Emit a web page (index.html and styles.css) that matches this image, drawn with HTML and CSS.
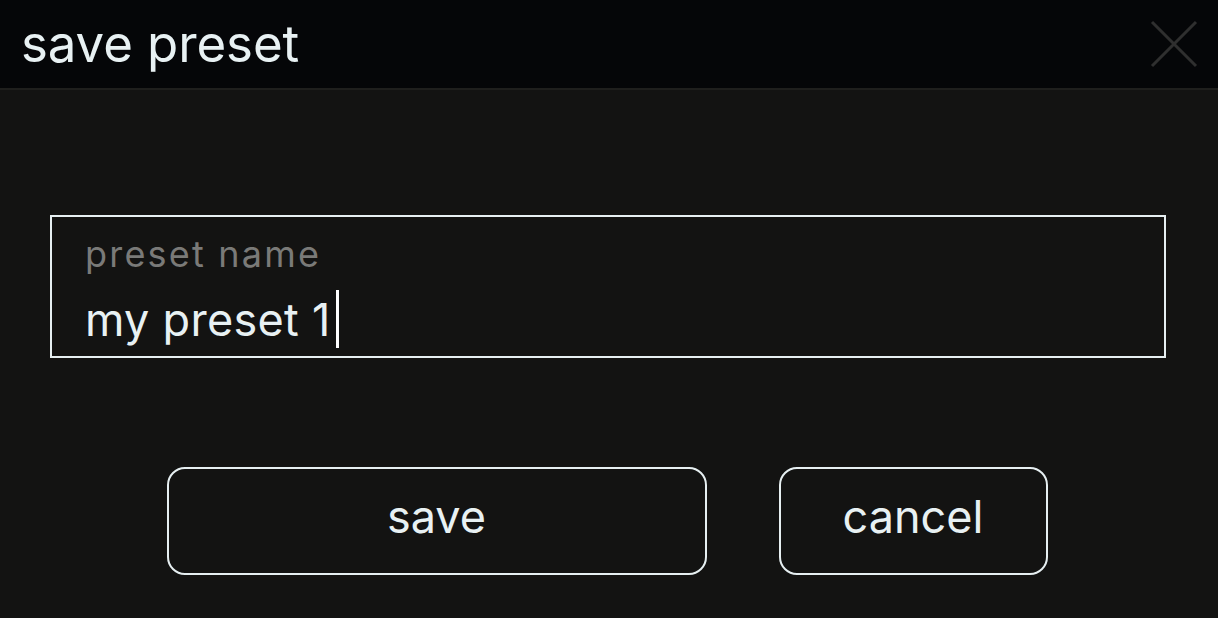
FILE: index.html
```html
<!DOCTYPE html>
<html>
<head>
<meta charset="utf-8">
<link rel="stylesheet" href="styles.css">
</head>
<body>
<div class="dialog">
  <header class="header">
    <h1 class="title">save preset</h1>
    <button class="close" aria-label="close">
      <svg width="48" height="48" viewBox="0 0 48 48"><path d="M2 2 L46 46 M46 2 L2 46" stroke="#2f2f2f" stroke-width="3" fill="none"/></svg>
    </button>
  </header>
  <main class="body">
    <div class="field">
      <div class="label">preset name</div>
      <div class="value">my preset 1<span class="caret"></span></div>
    </div>
    <div class="actions">
      <button class="btn btn-save">save</button>
      <button class="btn btn-cancel">cancel</button>
    </div>
  </main>
</div>
</body>
</html>
```
FILE: styles.css
```css
* { box-sizing: border-box; }
html, body { margin: 0; padding: 0; }
body {
  width: 1218px;
  height: 618px;
  background: #131312;
  font-family: Inter, "Liberation Sans", sans-serif;
  color: #e8f1f3;
  overflow: hidden;
}
.dialog { display: flex; flex-direction: column; height: 618px; }
.header {
  height: 90px;
  background: #050608;
  border-bottom: 2px solid #1f1f1d;
  display: flex;
  align-items: flex-start;
  justify-content: space-between;
  padding: 0 20px 0 21px;
}
.title {
  margin: 0;
  font-size: 51px;
  font-weight: 400;
  line-height: 1;
  padding-top: 18px;
  letter-spacing: -0.1px;
}
.close {
  background: none;
  border: 0;
  padding: 0;
  margin-top: 20px;
  width: 48px;
  height: 48px;
}
.close svg { display: block; }
.body {
  flex: 1;
  display: flex;
  flex-direction: column;
  padding: 125px 52px 0 50px;
}
.field {
  height: 143px;
  border: 2px solid #e6eff1;
  padding: 19px 34px 0 34px;
}
.label {
  font-size: 36px;
  line-height: 1;
  color: #7a7a78;
  letter-spacing: 2.2px;
  margin-left: -1px;
}
.value {
  margin-top: 18px;
  margin-left: -1px;
  font-size: 45px;
  line-height: 1;
  letter-spacing: 0.3px;
  display: flex;
  align-items: center;
}
.caret {
  display: inline-block;
  width: 3px;
  height: 58px;
  background: #ffffff;
  margin-left: 5px;
}
.actions {
  margin-top: 109px;
  display: flex;
  justify-content: center;
  gap: 72px;
  padding-right: 2px;
}
.btn {
  height: 108px;
  background: transparent;
  border: 2px solid #e6eff1;
  border-radius: 18px;
  color: #e8f1f3;
  font-family: Inter, "Liberation Sans", sans-serif;
  font-size: 45px;
  padding: 0 0 9px 0;
}
.btn-save { width: 540px; }
.btn-cancel { width: 269px; }
```
